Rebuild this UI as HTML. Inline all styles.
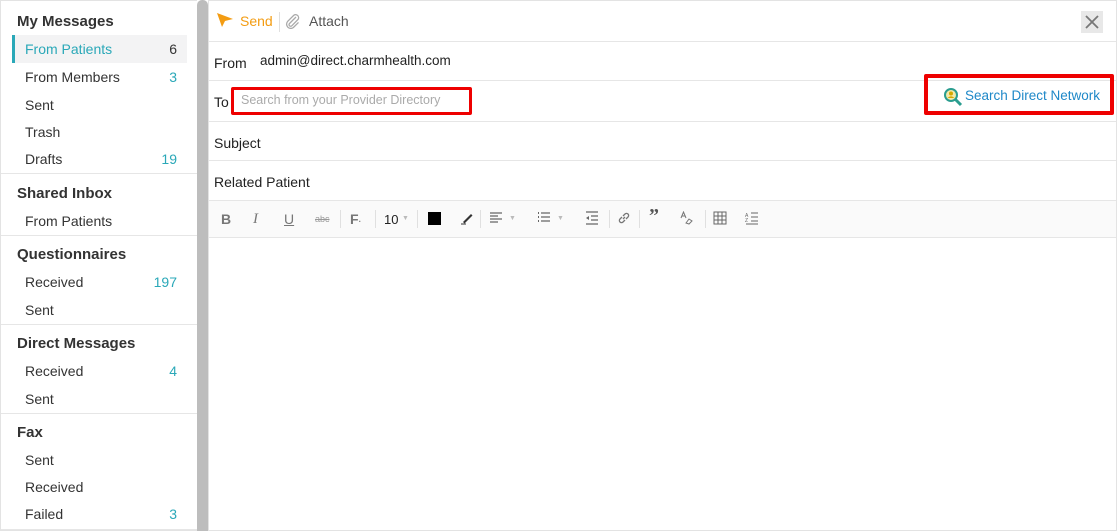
<!DOCTYPE html>
<html><head><style>
*{margin:0;padding:0;box-sizing:border-box}
body{width:1117px;height:531px;overflow:hidden;background:#fff;font-family:"Liberation Sans",sans-serif;color:#222;position:relative}
.sb{position:absolute;left:0;top:0;width:197px;height:531px;background:#fff;border:1px solid #e3e3e3;border-right:none}
.h{position:absolute;left:16px;font-size:15px;font-weight:bold;color:#333}
.it{position:absolute;left:24px;font-size:14px;color:#333}
.n{position:absolute;right:20px;font-size:14px;color:#2aa8b8}
.dv{position:absolute;left:0;width:197px;height:1px;background:#e6e6e6}
.scr{position:absolute;left:197px;top:0;width:11px;height:531px;background:#bdbdbd;border-radius:5px 5px 0 0}
.mn{position:absolute;left:208px;top:0;width:909px;height:531px;border:1px solid #e3e3e3}
.ln{position:absolute;left:0;width:907px;height:1px;background:#e6e6e6}
.lb{position:absolute;left:5px;font-size:14px;color:#222}
.tb{position:absolute;left:0;top:199px;width:907px;height:38px;background:#fafafa;border-bottom:1px solid #e6e6e6;border-top:1px solid #e6e6e6}
.ic{position:absolute;top:10px;font-size:14px;color:#777}
.sep{position:absolute;top:9px;width:1px;height:18px;background:#e0e0e0}
svg.s{position:absolute;top:10px}
.dd{position:absolute;top:14px;font-size:7px;color:#bbb}
</style></head><body>
<div class="sb">
<div class="h" style="top:12px">My Messages</div>
<div style="position:absolute;left:11px;top:34px;width:175px;height:28px;background:#f3f3f4;border-left:3px solid #2aa8b8"></div>
<div class="it" style="top:40px;color:#2aa8b8">From Patients</div><div class="n" style="top:40px;color:#333">6</div>
<div class="it" style="top:68px">From Members</div><div class="n" style="top:68px">3</div>
<div class="it" style="top:96px">Sent</div>
<div class="it" style="top:123px">Trash</div>
<div class="it" style="top:150px">Drafts</div><div class="n" style="top:150px">19</div>
<div class="dv" style="top:172px"></div>
<div class="h" style="top:184px">Shared Inbox</div>
<div class="it" style="top:212px">From Patients</div>
<div class="dv" style="top:234px"></div>
<div class="h" style="top:245px">Questionnaires</div>
<div class="it" style="top:273px">Received</div><div class="n" style="top:273px">197</div>
<div class="it" style="top:301px">Sent</div>
<div class="dv" style="top:323px"></div>
<div class="h" style="top:334px">Direct Messages</div>
<div class="it" style="top:362px">Received</div><div class="n" style="top:362px">4</div>
<div class="it" style="top:390px">Sent</div>
<div class="dv" style="top:412px"></div>
<div class="h" style="top:423px">Fax</div>
<div class="it" style="top:451px">Sent</div>
<div class="it" style="top:478px">Received</div>
<div class="it" style="top:505px">Failed</div><div class="n" style="top:505px">3</div>
<div class="dv" style="top:528px"></div>
</div>
<div class="scr"></div>
<div class="mn">
<svg style="position:absolute;left:7px;top:11px" width="18" height="16" viewBox="0 0 18 16"><path d="M1 1 L17 7 L9 9 L6 15 Z" fill="#f39c12"/></svg>
<div style="position:absolute;left:31px;top:12px;font-size:14px;color:#f39c12">Send</div>
<div style="position:absolute;left:70px;top:11px;width:1px;height:20px;background:#e0e0e0"></div>
<svg style="position:absolute;left:76px;top:12px" width="16" height="16" viewBox="0 0 16 16"><path d="M11 4 L4.5 10.5 A1.6 1.6 0 0 0 6.8 12.8 L13 6.5 A3 3 0 0 0 8.8 2.3 L2.5 8.6 A4.2 4.2 0 0 0 8.4 14.5 L13.5 9.4" fill="none" stroke="#aaa" stroke-width="1.3"/></svg>
<div style="position:absolute;left:100px;top:12px;font-size:14px;color:#555">Attach</div>
<div style="position:absolute;left:872px;top:10px;width:22px;height:22px;background:#e8e8e8"></div>
<svg style="position:absolute;left:876px;top:14px" width="14" height="14" viewBox="0 0 14 14"><path d="M1 1L13 13M13 1L1 13" stroke="#777" stroke-width="1.8"/></svg>
<div class="ln" style="top:40px"></div>
<div class="lb" style="top:54px">From</div>
<div style="position:absolute;left:51px;top:52px;font-size:13.5px;color:#222">admin@direct.charmhealth.com</div>
<div class="ln" style="top:79px"></div>
<div class="lb" style="top:93px">To</div>
<div style="position:absolute;left:22px;top:86px;width:241px;height:28px;border:3px solid #ee0000;border-radius:2px"></div>
<div style="position:absolute;left:32px;top:92px;font-size:12.5px;color:#aaa">Search from your Provider Directory</div>
<div style="position:absolute;left:715px;top:73px;width:190px;height:41px;border:4px solid #ee0000;border-radius:2px"></div>
<svg style="position:absolute;left:734px;top:86px" width="20" height="20" viewBox="0 0 20 20"><circle cx="8" cy="8" r="6" fill="#f3e9a8" stroke="#2a9d8f" stroke-width="2"/><circle cx="8" cy="6.5" r="2" fill="#d4a800"/><path d="M4.5 11 Q8 7.5 11.5 11 Z" fill="#d4a800"/><path d="M12 12 L18 18" stroke="#2a9d8f" stroke-width="3"/></svg>
<div style="position:absolute;left:756px;top:87px;font-size:13.5px;color:#1e88c8">Search Direct Network</div>
<div class="ln" style="top:120px"></div>
<div class="lb" style="top:134px">Subject</div>
<div class="ln" style="top:159px"></div>
<div class="lb" style="top:173px">Related Patient</div>
<div class="tb">
<div class="ic" style="left:12px;font-weight:bold">B</div>
<div class="ic" style="left:44px;font-style:italic;font-family:'Liberation Serif',serif;font-size:15px">I</div>
<div class="ic" style="left:75px;text-decoration:underline">U</div>
<div class="ic" style="left:106px;font-size:9px;top:13px;text-decoration:line-through;color:#999">abc</div>
<div class="sep" style="left:131px"></div>
<div class="ic" style="left:141px;font-weight:bold">F<span style="font-size:8px">·</span></div>
<div class="sep" style="left:166px"></div>
<div class="ic" style="left:175px;color:#222;font-size:13px;top:11px">10</div><div class="dd" style="left:193px">▼</div>
<div class="sep" style="left:208px"></div>
<div style="position:absolute;left:219px;top:11px;width:13px;height:13px;background:#000"></div>
<svg class="s" style="left:251px" width="14" height="14" viewBox="0 0 14 14"><path d="M3 11 L11 3 L12.5 4.5 L4.5 12.5 Z" fill="#333"/><path d="M1 13 H6" stroke="#333"/></svg>
<div class="sep" style="left:271px"></div>
<svg class="s" style="left:280px" width="14" height="14" viewBox="0 0 14 14"><path d="M1 2H13M1 5H9M1 8H13M1 11H9" stroke="#666" stroke-width="1.2"/></svg><div class="dd" style="left:300px">▼</div>
<svg class="s" style="left:328px" width="14" height="14" viewBox="0 0 14 14"><path d="M4 2H13M4 6H13M4 10H13" stroke="#666" stroke-width="1.2"/><path d="M1 2H2M1 6H2M1 10H2" stroke="#666" stroke-width="2"/></svg><div class="dd" style="left:348px">▼</div>
<svg class="s" style="left:376px" width="14" height="14" viewBox="0 0 14 14"><path d="M1 1H13M6 5H13M6 9H13M1 13H13" stroke="#666" stroke-width="1.2"/><path d="M4 5L1 7L4 9Z" fill="#666"/></svg>
<div class="sep" style="left:400px"></div>
<svg class="s" style="left:408px" width="14" height="14" viewBox="0 0 14 14"><path d="M6 8L8 6M5 6L3 8A2 2 0 0 0 6 11L8 9M9 8L11 6A2 2 0 0 0 8 3L6 5" fill="none" stroke="#777" stroke-width="1.3"/></svg>
<div class="sep" style="left:430px"></div>
<div class="ic" style="left:440px;font-weight:bold;font-size:20px;top:4px;color:#555;font-family:'Liberation Serif',serif">”</div>
<svg class="s" style="left:471px" width="14" height="14" viewBox="0 0 14 14"><path d="M1 7L3.5 1L6 7M2 5H5" fill="none" stroke="#777"/><path d="M6 12L9 8L12 10L9 13Z" fill="none" stroke="#777"/></svg>
<div class="sep" style="left:496px"></div>
<svg class="s" style="left:504px" width="14" height="14" viewBox="0 0 14 14"><rect x="1" y="1" width="12" height="12" fill="none" stroke="#666"/><path d="M1 5H13M1 9H13M5 1V13M9 1V13" stroke="#666"/></svg>
<svg class="s" style="left:536px" width="14" height="14" viewBox="0 0 14 14"><path d="M6 2H13M6 6H13M6 10H13M1 13H13" stroke="#666"/><text x="0" y="6" font-size="5" fill="#666">A</text><text x="0" y="11" font-size="5" fill="#666">Z</text></svg>
</div>
</div>
</body></html>
